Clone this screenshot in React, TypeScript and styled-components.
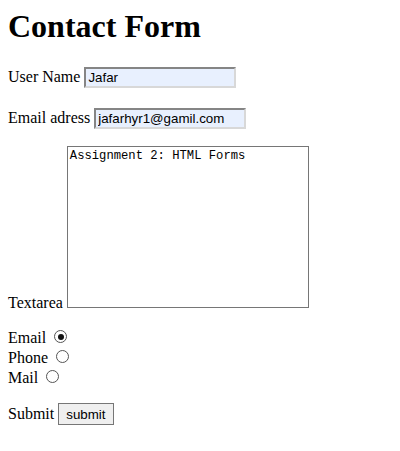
import React from "react";
import styled, { createGlobalStyle } from "styled-components";

const Global = createGlobalStyle`
  html, body { background: #fff; }
  body {
    margin: 8px;
    font-family: "Liberation Serif", "Times New Roman", serif;
    font-size: 16px;
    color: #000;
  }
`;

const Title = styled.h1`
  font-size: 32px;
  font-weight: bold;
  margin: 0;
  line-height: normal;
`;

const Form = styled.form`
  display: flex;
  flex-direction: column;
  align-items: flex-start;
`;

const Row = styled.p<{ $top: number }>`
  margin: ${(p) => p.$top}px 0 0;
`;

const TextInput = styled.input`
  font-family: "Liberation Sans", Arial, sans-serif;
  font-size: 13.33px;
  width: 152px;
  height: 21px;
  box-sizing: border-box;
  padding: 1px 2px;
  margin: 0;
  background: #e8f0fe;
  color: #000;
  border-style: solid;
  border-width: 2px;
  border-color: #858585 #d8d8d8 #d8d8d8 #858585;
  outline: none;
`;

const Area = styled.textarea`
  font-family: "Liberation Mono", "Courier New", monospace;
  font-size: 12.2px;
  width: 242px;
  height: 162px;
  box-sizing: border-box;
  padding: 2px;
  margin: 0;
  border: 1px solid #767676;
  resize: none;
  vertical-align: baseline;
  color: #000;
  line-height: normal;
  outline: none;
`;

const Radio = styled.input`
  appearance: none;
  width: 13px;
  height: 13px;
  margin: 3px 3px 0 4px;
  border: 1px solid #555;
  border-radius: 50%;
  box-sizing: border-box;
  background: #fff;
  position: relative;
  vertical-align: baseline;
  &:checked::after {
    content: "";
    position: absolute;
    left: 2.5px;
    top: 2.5px;
    width: 6px;
    height: 6px;
    border-radius: 50%;
    background: #111;
  }
`;

const SubmitButton = styled.input`
  font-family: "Liberation Sans", Arial, sans-serif;
  font-size: 13.33px;
  padding: 1px 7px;
  height: 22px;
  box-sizing: border-box;
  margin: 0;
  background: #efefef;
  border: 1px solid #767676;
  color: #000;
`;

export default function App() {
  return (
    <>
      <Global />
      <Title>Contact Form</Title>
      <Form onSubmit={(e) => e.preventDefault()}>
        <Row $top={22.4}>
          User Name <TextInput type="text" defaultValue="Jafar" />
        </Row>
        <Row $top={20}>
          Email adress <TextInput type="text" defaultValue="jafarhyr1@gamil.com" />
        </Row>
        <Row $top={17}>
          Textarea <Area defaultValue="Assignment 2: HTML Forms" />
        </Row>
        <Row $top={15}>
          Email <Radio type="radio" name="c" defaultChecked />
          <br />
          Phone <Radio type="radio" name="c" />
          <br />
          Mail <Radio type="radio" name="c" />
        </Row>
        <Row $top={16}>
          Submit <SubmitButton type="submit" value="submit" />
        </Row>
      </Form>
    </>
  );
}
